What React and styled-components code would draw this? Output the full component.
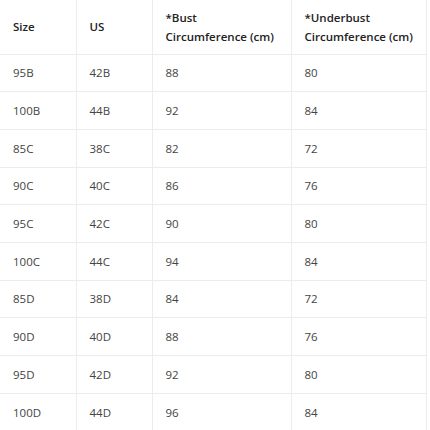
import React from "react";
import styled, { createGlobalStyle } from "styled-components";

const Global = createGlobalStyle`
  html, body { margin: 0; padding: 0; background: #fff; }
  body { font-family: "Open Sans", "Noto Sans", sans-serif; }
`;

const Table = styled.table`
  border-collapse: collapse;
  table-layout: fixed;
  width: 426px;
`;

const Col = styled.col`
  width: ${(p) => p.$w}px;
`;

const HeadCell = styled.th`
  height: 54px;
  box-sizing: border-box;
  padding: 0 8px 0 13px;
  text-align: left;
  vertical-align: middle;
  font-size: 11.5px;
  font-weight: 600;
  line-height: 19px;
  color: #222;
  border-bottom: 1px solid #ececec;
  border-right: 1px solid #ececec;
`;

const Cell = styled.td`
  height: 37.7px;
  box-sizing: border-box;
  padding: 0 8px 0 13px;
  font-size: 11.5px;
  color: #444;
  vertical-align: middle;
  border-bottom: 1px solid #ececec;
  border-right: 1px solid #ececec;
`;

const rows = [
  ["95B", "42B", "88", "80"],
  ["100B", "44B", "92", "84"],
  ["85C", "38C", "82", "72"],
  ["90C", "40C", "86", "76"],
  ["95C", "42C", "90", "80"],
  ["100C", "44C", "94", "84"],
  ["85D", "38D", "84", "72"],
  ["90D", "40D", "88", "76"],
  ["95D", "42D", "92", "80"],
  ["100D", "44D", "96", "84"],
];

export default function App() {
  return (
    <>
      <Global />
      <Table>
        <colgroup>
          <Col $w={76} />
          <Col $w={76} />
          <Col $w={139} />
          <Col $w={135} />
        </colgroup>
        <thead>
          <tr>
            <HeadCell>Size</HeadCell>
            <HeadCell>US</HeadCell>
            <HeadCell>*Bust<br />Circumference (cm)</HeadCell>
            <HeadCell>*Underbust<br />Circumference (cm)</HeadCell>
          </tr>
        </thead>
        <tbody>
          {rows.map((r) => (
            <tr key={r[0]}>
              {r.map((c, i) => (
                <Cell key={i}>{c}</Cell>
              ))}
            </tr>
          ))}
        </tbody>
      </Table>
    </>
  );
}
